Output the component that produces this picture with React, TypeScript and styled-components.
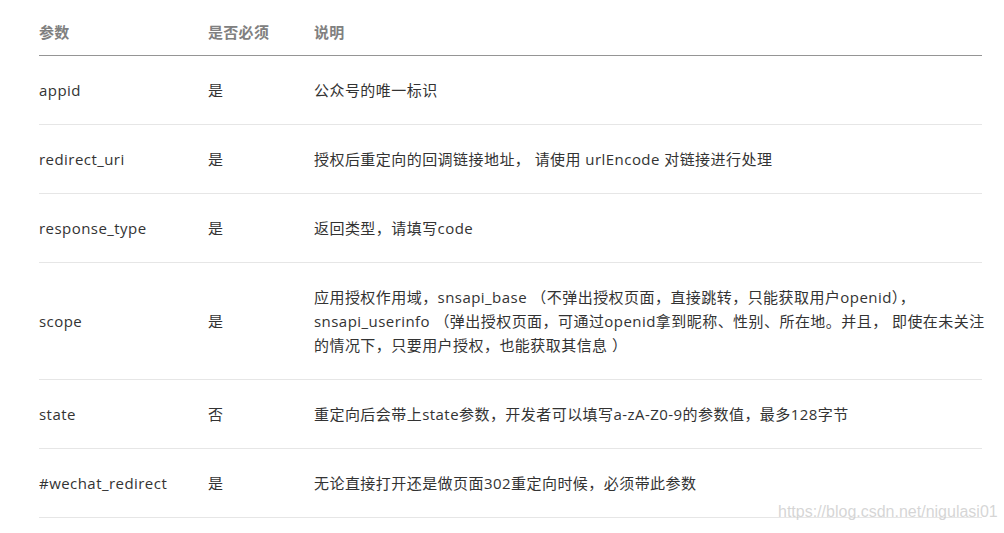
import styled, { createGlobalStyle } from "styled-components";

const GlobalStyle = createGlobalStyle`
    html, body {
        margin: 0;
        padding: 0;
        background: #ffffff;
    }
    body {
        font-family: "Open Sans", "Noto Sans CJK SC", sans-serif;
    }
`;

type Row = {
    name: string;
    required: string;
    desc: string;
};

const rows: Row[] = [
    { name: "appid", required: "是", desc: "公众号的唯一标识" },
    {
        name: "redirect_uri",
        required: "是",
        desc: "授权后重定向的回调链接地址， 请使用 urlEncode 对链接进行处理",
    },
    { name: "response_type", required: "是", desc: "返回类型，请填写code" },
    {
        name: "scope",
        required: "是",
        desc: "应用授权作用域，snsapi_base （不弹出授权页面，直接跳转，只能获取用户openid）， snsapi_userinfo （弹出授权页面，可通过openid拿到昵称、性别、所在地。并且， 即使在未关注的情况下，只要用户授权，也能获取其信息 ）",
    },
    {
        name: "state",
        required: "否",
        desc: "重定向后会带上state参数，开发者可以填写a-zA-Z0-9的参数值，最多128字节",
    },
    {
        name: "#wechat_redirect",
        required: "是",
        desc: "无论直接打开还是做页面302重定向时候，必须带此参数",
    },
];

const App = () => {
    return (
        <Page>
            <GlobalStyle />
            <ParamTable>
                <colgroup>
                    <col style={{ width: 169 }} />
                    <col style={{ width: 106 }} />
                    <col />
                </colgroup>
                <thead>
                    <tr>
                        <HeadCell>参数</HeadCell>
                        <HeadCell>是否必须</HeadCell>
                        <HeadCell>说明</HeadCell>
                    </tr>
                </thead>
                <tbody>
                    {rows.map((row) => (
                        <tr key={row.name}>
                            <Cell>{row.name}</Cell>
                            <Cell>{row.required}</Cell>
                            <Cell>
                                <DescText>{row.desc}</DescText>
                            </Cell>
                        </tr>
                    ))}
                </tbody>
            </ParamTable>
            <Watermark>https://blog.csdn.net/nigulasi01</Watermark>
        </Page>
    );
};

export default App;

const Page = styled.div`
    position: relative;
    width: 1004px;
    height: 533px;
    box-sizing: border-box;
    padding: 8px 22px 0 39px;
    overflow: hidden;
`;

const ParamTable = styled.table`
    width: 943px;
    border-collapse: collapse;
    table-layout: fixed;
    font-size: 15px;
    line-height: 24px;
    letter-spacing: 0.45px;
    color: #333333;
`;

const HeadCell = styled.th`
    padding: 12px 0 11px;
    text-align: left;
    font-weight: 700;
    font-size: 15px;
    letter-spacing: 0.3px;
    color: #808080;
    border-bottom: 1px solid #959595;
`;

const Cell = styled.td`
    padding: 22px 0;
    vertical-align: middle;
    text-align: left;
    border-bottom: 1px solid #e6e6e6;
`;

const DescText = styled.div`
    margin-right: -7px;
`;

const Watermark = styled.div`
    position: absolute;
    left: 778px;
    top: 503px;
    font-family: "Liberation Sans", Arial, sans-serif;
    font-size: 16px;
    color: rgba(200, 200, 200, 0.75);
    white-space: nowrap;
`;
